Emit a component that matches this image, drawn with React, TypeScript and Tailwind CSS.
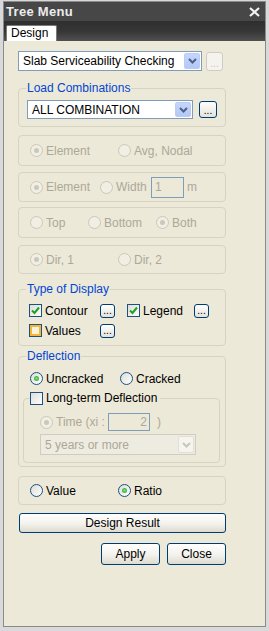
import React from 'react';

const font = { fontFamily: '"Liberation Sans", Arial, sans-serif' };

const Radio = ({ checked = false, disabled = false }: { checked?: boolean; disabled?: boolean }) => (
  <span
    className={`w-[13px] h-[13px] rounded-full border flex items-center justify-center shrink-0 ${
      disabled ? 'border-[#cac8bb] bg-[#f1efe4]' : 'border-[#1c5180] bg-gradient-to-br from-[#dcdcd7] to-white'
    }`}
  >
    {checked && (
      <span
        className={`w-[5px] h-[5px] rounded-full ${
          disabled ? 'bg-[#cac8bb]' : 'bg-[radial-gradient(circle,#7fe07f,#21a121)]'
        }`}
      />
    )}
  </span>
);

const Check = ({ checked = false, hot = false }: { checked?: boolean; hot?: boolean }) => (
  <span
    className={`w-[13px] h-[13px] border border-[#1c5180] flex items-center justify-center shrink-0 ${
      hot ? 'bg-white' : 'bg-gradient-to-br from-[#dcdcd7] to-white'
    }`}
  >
    {hot && <span className="w-[11px] h-[11px] border-2 border-[#f8b636] bg-[#fdf3dd]" />}
    {checked && (
      <svg width="9" height="9" viewBox="0 0 9 9">
        <path d="M1 4.5 L3.5 7 L8 1.5" stroke="#21a121" strokeWidth="2" fill="none" />
      </svg>
    )}
  </span>
);

const Dots = ({ disabled = false, w = 'w-[15px] h-[14px]' }: { disabled?: boolean; w?: string }) => (
  <span
    className={`${w} rounded-[3px] border flex items-end justify-center shrink-0 text-[10px] leading-[10px] pb-[1px] ${
      disabled
        ? 'border-[#cfcdc1] bg-[#f4f3ee] text-[#c4c2b4]'
        : 'border-[#003c74] bg-gradient-to-b from-white to-[#e3e2da] text-black'
    }`}
  >
    ...
  </span>
);

const Chevron = ({ color }: { color: string }) => (
  <svg width="9" height="6" viewBox="0 0 9 6">
    <path d="M1 1 L4.5 4.5 L8 1" stroke={color} strokeWidth="2" fill="none" />
  </svg>
);

const Combo = ({ text, className }: { text: string; className: string }) => (
  <div className={`${className} border border-[#7f9db9] bg-white flex items-center p-[1px]`}>
    <span className="flex-1 pl-[3px] text-[12px] text-black whitespace-nowrap overflow-hidden">{text}</span>
    <span className="w-[16px] self-stretch rounded-[2px] bg-gradient-to-b from-[#c6d6fc] to-[#b2c8f6] border border-[#b9ccf5] flex items-center justify-center">
      <Chevron color="#4d6185" />
    </span>
  </div>
);

const Group = ({ className, children }: { className: string; children: React.ReactNode }) => (
  <div className={`${className} border border-[#d6d3c2] rounded-[4px] flex items-center pl-[11px] text-[12px]`}>
    {children}
  </div>
);

const Opt = ({ label, checked, disabled, className = '' }: { label: string; checked?: boolean; disabled?: boolean; className?: string }) => (
  <span className={`flex items-center gap-[3px] ${className} ${disabled ? 'text-[#aca899]' : 'text-black'}`}>
    <Radio checked={checked} disabled={disabled} />
    <span className="leading-[14px] whitespace-nowrap">{label}</span>
  </span>
);

const Button = ({ label, className }: { label: string; className: string }) => (
  <div
    className={`${className} rounded-[3px] border border-[#003c74] bg-gradient-to-b from-white via-[#f4f3ee] to-[#dedcd0] flex items-center justify-center text-[12px] text-black`}
  >
    {label}
  </div>
);

export default function App() {
  return (
    <div style={font} className="w-[269px] h-[631px] bg-[#d9d9d9] pt-[1px] px-[3px] pb-[4px]">
      <div className="h-full border border-[#8a8a8a] flex flex-col">
        {/* title bar */}
        <div className="h-[19px] bg-[#474747] flex items-center justify-between pl-[2px] pr-[5px]">
          <span className="text-[13px] font-bold text-[#ececec] tracking-[0.3px]">Tree Menu</span>
          <svg width="11" height="10" viewBox="0 0 11 10">
            <path d="M1 1 L10 9 M10 1 L1 9" stroke="#f2f2f2" strokeWidth="2.2" />
          </svg>
        </div>
        {/* tab strip */}
        <div className="h-[20px] bg-gradient-to-b from-[#2e2e2e] via-[#363636] to-[#505050] flex items-end pl-[2px]">
          <div className="h-[16px] w-[51px] bg-white border border-[#7a7a7a] border-b-0 rounded-t-[2px] text-[12px] text-black leading-[14px] pl-[4px]">
            Design
          </div>
        </div>

        {/* content */}
        <div className="flex-1 bg-[#ece9d8] pl-[14px]">
          <div className="w-[208px] flex flex-col">
            <div className="mt-[10px] flex items-center gap-[4px]">
              <Combo text="Slab Serviceability Checking" className="w-[184px] h-[20px]" />
              <Dots disabled w="w-[17px] h-[19px]" />
            </div>

            <fieldset className="mt-[10px] border border-[#d6d3c2] rounded-[4px] pl-[8px] pb-[7px]">
              <legend className="text-[12px] leading-[14px] text-[#0046d5] px-[1px] -ml-[1px]">Load Combinations</legend>
              <div className="mt-[5px] flex items-center gap-[6px]">
                <Combo text="ALL COMBINATION" className="w-[166px] h-[19px]" />
                <Dots w="w-[18px] h-[17px]" />
              </div>
            </fieldset>

            <Group className="mt-[8px] h-[31px]">
              <Opt label="Element" checked disabled className="w-[88px]" />
              <Opt label="Avg, Nodal" disabled />
            </Group>

            <Group className="mt-[6px] h-[30px]">
              <Opt label="Element" checked disabled className="w-[70px]" />
              <Opt label="Width" disabled className="w-[51px]" />
              <span className="w-[33px] h-[21px] border border-[#7f9db9] text-[#aca899] leading-[18px] pl-[3px]">1</span>
              <span className="ml-[3px] text-[#aca899]">m</span>
            </Group>

            <Group className="mt-[5px] h-[31px]">
              <Opt label="Top" disabled className="w-[58px]" />
              <Opt label="Bottom" disabled className="w-[68px]" />
              <Opt label="Both" checked disabled />
            </Group>

            <Group className="mt-[7px] h-[29px]">
              <Opt label="Dir, 1" checked disabled className="w-[88px]" />
              <Opt label="Dir, 2" disabled />
            </Group>

            <fieldset className="mt-[8px] border border-[#d6d3c2] rounded-[4px] pl-[10px] pb-[8px] text-[12px]">
              <legend className="text-[12px] leading-[14px] text-[#0046d5] px-[1px] ml-[-3px]">Type of Display</legend>
              <div className="mt-[8px] flex flex-col gap-[7px]">
                <div className="flex items-center h-[13px]">
                  <span className="w-[71px] flex items-center gap-[3px]">
                    <Check checked />
                    <span className="leading-[14px]">Contour</span>
                  </span>
                  <Dots />
                  <span className="ml-[12px] w-[67px] flex items-center gap-[3px]">
                    <Check checked />
                    <span className="leading-[14px]">Legend</span>
                  </span>
                  <Dots />
                </div>
                <div className="flex items-center h-[13px]">
                  <span className="w-[71px] flex items-center gap-[3px]">
                    <Check hot />
                    <span className="leading-[14px]">Values</span>
                  </span>
                  <Dots />
                </div>
              </div>
            </fieldset>

            <fieldset className="mt-[3px] border border-[#d6d3c2] rounded-[4px] pl-[4px] pr-[5px] pb-[3px] text-[12px]">
              <legend className="text-[12px] leading-[14px] text-[#0046d5] px-[1px] ml-[3px]">Deflection</legend>
              <div className="mt-[9px] flex items-center h-[13px] pl-[7px]">
                <Opt label="Uncracked" checked className="w-[90px]" />
                <Opt label="Cracked" />
              </div>
              <fieldset className="mt-[6px] border border-[#d6d3c2] rounded-[4px] pl-[16px] pb-[7px]">
                <legend className="px-[0px] -ml-[10px] pr-[3px]">
                  <span className="flex items-center gap-[3px]">
                    <Check />
                    <span className="leading-[14px]">Long-term Deflection</span>
                  </span>
                </legend>
                <div className="mt-[8px] flex items-center h-[18px] text-[#aca899]">
                  <Opt label="Time (xi :" checked disabled className="w-[68px]" />
                  <span className="w-[42px] h-[18px] border border-[#7f9db9] text-right pr-[2px] leading-[16px]">2</span>
                  <span className="ml-[7px]">)</span>
                </div>
                <div className="mt-[3px] w-[156px] h-[21px] border border-[#cfcdc1] bg-[#eeebe0] flex items-center p-[1px] text-[#aca899]">
                  <span className="flex-1 pl-[3px] whitespace-nowrap">5 years or more</span>
                  <span className="w-[16px] self-stretch rounded-[2px] bg-[#f5f4ee] border border-[#e2e0d5] flex items-center justify-center">
                    <Chevron color="#c9c7ba" />
                  </span>
                </div>
              </fieldset>
            </fieldset>

            <Group className="mt-[9px] h-[29px]">
              <Opt label="Value" className="w-[88px]" />
              <Opt label="Ratio" checked />
            </Group>

            <Button label="Design Result" className="mt-[8px] ml-[1px] w-[207px] h-[20px]" />

            <div className="mt-[10px] flex justify-end gap-[7px]">
              <Button label="Apply" className="w-[59px] h-[22px]" />
              <Button label="Close" className="w-[59px] h-[22px]" />
            </div>
          </div>
        </div>
      </div>
    </div>
  );
}
